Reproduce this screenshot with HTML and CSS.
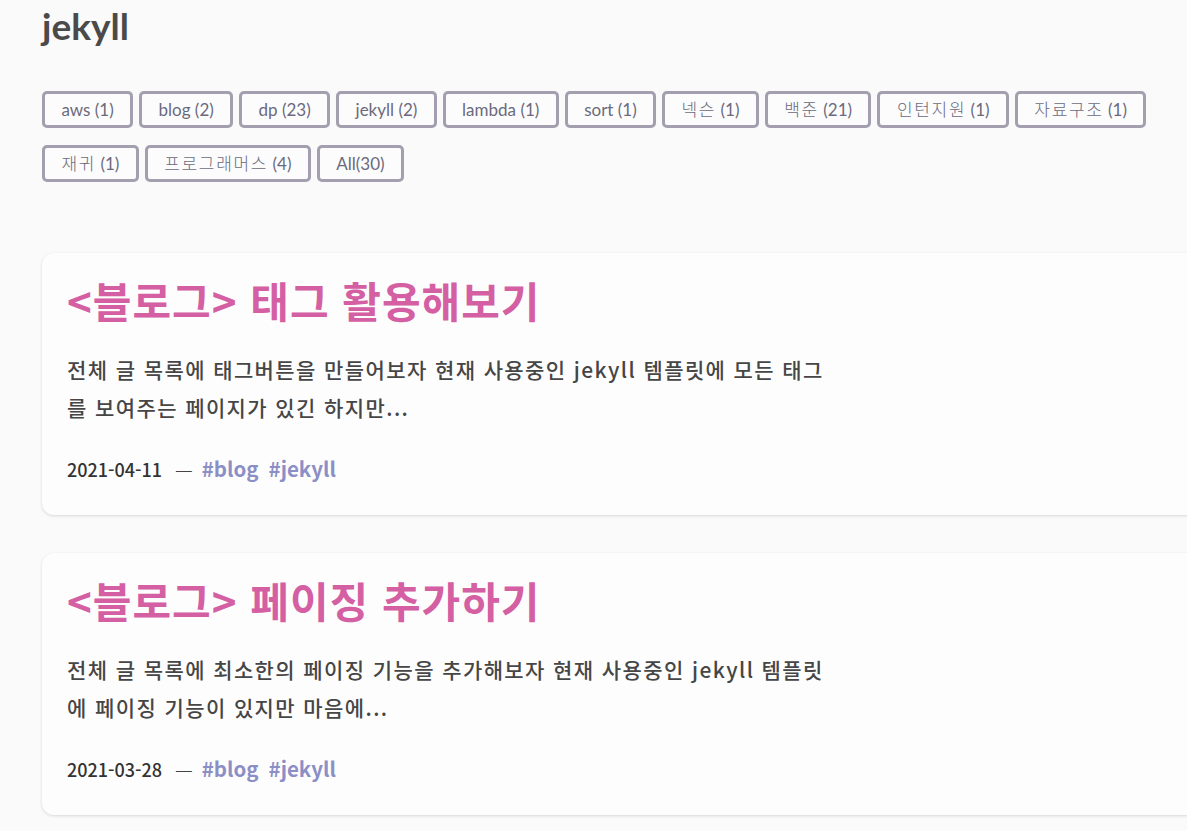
FILE: index.html
```html
<!DOCTYPE html>
<html lang="ko">
<head>
<meta charset="utf-8">
<title>jekyll</title>
<link rel="stylesheet" href="styles.css">
</head>
<body>
<main class="page">
  <h1 class="page-title">jekyll</h1>
  <div class="tag-list">
    <a class="tag-btn">aws (1)</a>
    <a class="tag-btn">blog (2)</a>
    <a class="tag-btn">dp (23)</a>
    <a class="tag-btn">jekyll (2)</a>
    <a class="tag-btn">lambda (1)</a>
    <a class="tag-btn">sort (1)</a>
    <a class="tag-btn"><span class="ko">넥슨</span> (1)</a>
    <a class="tag-btn"><span class="ko">백준</span> (21)</a>
    <a class="tag-btn"><span class="ko">인턴지원</span> (1)</a>
    <a class="tag-btn"><span class="ko">자료구조</span> (1)</a>
    <a class="tag-btn"><span class="ko">재귀</span> (1)</a>
    <a class="tag-btn"><span class="ko">프로그래머스</span> (4)</a>
    <a class="tag-btn">All(30)</a>
  </div>
  <section class="posts">
    <article class="post-card">
      <h2 class="post-title">&lt;블로그&gt; 태그 활용해보기</h2>
      <p class="post-excerpt">전체 글 목록에 태그버튼을 만들어보자 현재 사용중인 jekyll 템플릿에 모든 태그를 보여주는 페이지가 있긴 하지만...</p>
      <div class="post-meta">
        <span class="post-date">2021-04-11</span>
        <span class="dash">—</span>
        <a class="post-tag">#blog</a>
        <a class="post-tag">#jekyll</a>
      </div>
    </article>
    <article class="post-card">
      <h2 class="post-title">&lt;블로그&gt; 페이징 추가하기</h2>
      <p class="post-excerpt">전체 글 목록에 최소한의 페이징 기능을 추가해보자 현재 사용중인 jekyll 템플릿에 페이징 기능이 있지만 마음에...</p>
      <div class="post-meta">
        <span class="post-date">2021-03-28</span>
        <span class="dash">—</span>
        <a class="post-tag">#blog</a>
        <a class="post-tag">#jekyll</a>
      </div>
    </article>
  </section>
</main>
</body>
</html>
```
FILE: styles.css
```css
html {
  overflow: hidden;
}
body {
  margin: 0;
  background: #fafafa;
  font-family: Lato, "Noto Sans CJK KR", sans-serif;
}
.page {
  padding: 4px 0 40px 42px;
}
.page-title {
  margin: 0;
  font-family: Lato, sans-serif;
  font-size: 37px;
  font-weight: 700;
  line-height: 44px;
  color: #4a4a4a;
}
.tag-list {
  margin-top: 43px;
  display: flex;
  flex-wrap: wrap;
  column-gap: 6px;
  row-gap: 17px;
  padding-right: 30px;
}
.tag-btn {
  display: inline-block;
  height: 31px;
  line-height: 31px;
  padding: 0 16.4px;
  border: 3px solid #a39fae;
  border-radius: 5px;
  font-family: Lato, "Noto Sans CJK KR", sans-serif;
  font-size: 17px;
  color: #6b6a7c;
  background: #fcfcfd;
}
.tag-btn .ko {
  font-weight: 300;
  letter-spacing: 1.7px;
}
.posts {
  margin-top: 71px;
  display: flex;
  flex-direction: column;
  gap: 38px;
  width: 1200px;
}
.post-card {
  background: #fdfdfd;
  border-radius: 12px;
  box-shadow: 0 1px 3px rgba(0, 0, 0, 0.14);
  padding: 21px 25px 32px;
}
.post-title {
  margin: 0;
  font-family: "Noto Sans CJK KR", sans-serif;
  font-size: 42px;
  font-weight: 700;
  line-height: 52px;
  letter-spacing: 1px;
  color: #d45fa3;
}
.post-excerpt {
  margin: 24px 0 0;
  max-width: 765px;
  font-family: "Noto Sans CJK KR", sans-serif;
  font-size: 21px;
  font-weight: 500;
  line-height: 38px;
  color: #464646;
  letter-spacing: 1.4px;
}
.post-meta {
  margin-top: 27px;
  display: flex;
  align-items: baseline;
  font-family: "Noto Sans CJK KR", sans-serif;
}
.post-date {
  font-size: 18px;
  font-weight: 500;
  color: #333333;
}
.dash {
  margin: 0 9px 0 13px;
  font-size: 20px;
  font-weight: 300;
  color: #444444;
}
.post-tag {
  font-size: 20.5px;
  font-weight: 700;
  color: #8b8fc6;
  margin-right: 10px;
}
```
